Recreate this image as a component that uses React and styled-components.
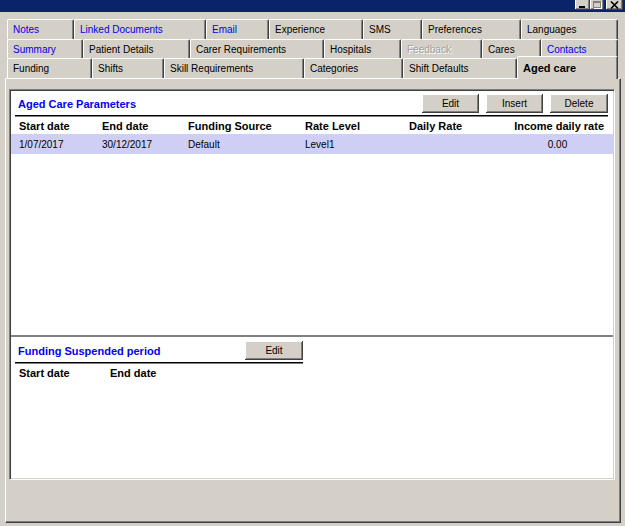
import React from 'react';
import styled, { createGlobalStyle, css } from 'styled-components';

const GlobalStyle = createGlobalStyle`
  html, body {
    margin: 0;
    padding: 0;
    background: #d4d0c8;
  }
  body {
    font-family: "Liberation Sans", Arial, sans-serif;
    font-size: 10px;
    color: #000;
  }
`;

const Window = styled.div`
  width: 625px;
  height: 526px;
  overflow: hidden;
  background: #d4d0c8;
  display: flex;
  flex-direction: column;
`;

const TitleBar = styled.div`
  flex-shrink: 0;
  height: 12px;
  box-sizing: border-box;
  padding: 0 2px 2px 0;
  background: #0a246a;
  display: flex;
  justify-content: flex-end;
  align-items: flex-end;
  overflow: hidden;
`;

const CaptionButton = styled.div`
  width: ${(p) => p.$w}px;
  height: 14px;
  margin-left: ${(p) => p.$gap || 0}px;
  flex-shrink: 0;
  box-sizing: border-box;
  background: #d4d0c8;
  box-shadow: inset -1px -1px 0 #404040, inset 1px 1px 0 #fff, inset -2px -2px 0 #808080;
  display: flex;
  align-items: center;
  justify-content: center;
  padding-top: 3px;
`;

const MinGlyph = styled.span`
  width: 6px;
  height: 2px;
  background: #000;
  margin-top: 5px;
  margin-right: 2px;
`;

const MaxGlyph = styled.span`
  width: 8px;
  height: 7px;
  box-sizing: border-box;
  border: 1px solid #808080;
  border-top-width: 2px;
  box-shadow: 1px 1px 0 #fff;
  margin-right: 1px;
`;

const Body = styled.div`
  flex: 1;
  display: flex;
  flex-direction: column;
  padding: 7px 4px 3px 5px;
  min-height: 0;
`;

const TabStack = styled.div`
  width: 611px;
  margin-left: 2px;
  display: flex;
  flex-direction: column;
`;

const TabRow = styled.div`
  display: flex;
  height: ${(p) => p.$h}px;
`;

const Tab = styled.div`
  width: ${(p) => p.$w}px;
  flex-shrink: 0;
  box-sizing: border-box;
  padding-left: 5px;
  display: flex;
  align-items: center;
  white-space: nowrap;
  overflow: hidden;
  background: #d4d0c8;
  border-top: 1px solid #fff;
  border-left: 1px solid #fff;
  border-right: 1px solid #404040;
  border-top-left-radius: 2px;
  border-top-right-radius: 2px;
  box-shadow: inset -1px 0 0 #808080;
  font-size: 10px;
  color: #000;
  ${(p) =>
    p.$kind === 'link' &&
    css`
      color: #0000f0;
    `}
  ${(p) =>
    p.$kind === 'disabled' &&
    css`
      color: #a0a0a0;
      text-shadow: 1px 1px 0 #fff;
    `}
  ${(p) =>
    p.$kind === 'selected' &&
    css`
      position: relative;
      z-index: 2;
      align-self: flex-start;
      height: 23px;
      margin-top: -2px;
      padding-bottom: 1px;
      font-weight: bold;
      font-size: 11px;
    `}
`;

const TabPanel = styled.div`
  flex: 1;
  min-height: 0;
  box-sizing: border-box;
  display: flex;
  flex-direction: column;
  border-top: 1px solid #fff;
  border-left: 1px solid #fff;
  border-right: 1px solid #404040;
  border-bottom: 1px solid #404040;
  box-shadow: inset -1px -1px 0 #808080;
  padding: 10px 5px 42px 3px;
`;

const Sunken = styled.div`
  flex: 1;
  display: flex;
  flex-direction: column;
  padding: 1px;
  background: #fff;
  border: 1px solid;
  border-color: #808080 #fff #fff #808080;
  box-shadow: inset 1px 1px 0 #404040, inset -1px -1px 0 #d4d0c8;
`;

const Section = styled.div`
  display: flex;
  flex-direction: column;
  box-sizing: border-box;
  ${(p) =>
    p.$height
      ? css`
          height: ${p.$height}px;
          flex-shrink: 0;
          border-bottom: 2px solid #808080;
        `
      : css`
          flex: 1;
        `}
`;

const SectionHeader = styled.div`
  display: flex;
  align-items: center;
  width: ${(p) => (p.$w ? `${p.$w}px` : 'auto')};
  margin: 0 5px 0 4px;
  padding: ${(p) => p.$pt}px 0 2px 3px;
  border-bottom: 1px solid #000;
  box-shadow: 0 1px 0 #808080;
  gap: 7px;
`;

const SectionTitle = styled.div`
  flex: 1;
  font-size: 11px;
  font-weight: bold;
  color: #0000ff;
  padding-top: 1px;
`;

const Button = styled.button`
  width: ${(p) => p.$w}px;
  height: 19px;
  padding: 0;
  margin: 0;
  border: none;
  background: #d4d0c8;
  font-family: "Liberation Sans", Arial, sans-serif;
  font-size: 10px;
  color: #000;
  box-shadow: inset -1px -1px 0 #404040, inset 1px 1px 0 #fff, inset -2px -2px 0 #808080;
`;

const GridRow = styled.div`
  display: grid;
  grid-template-columns: ${(p) => p.$cols};
  align-items: center;
  height: ${(p) => p.$h}px;
  padding: 0 9px 0 8px;
  margin-top: ${(p) => p.$mt || 0}px;
  background: ${(p) => (p.$selected ? '#cfcff5' : 'transparent')};
  font-size: ${(p) => (p.$head ? 11 : 10)}px;
  font-weight: ${(p) => (p.$head ? 'bold' : 'normal')};
  white-space: nowrap;
`;

const Cell = styled.div`
  text-align: ${(p) => p.$align || 'left'};
`;

const CloseIcon = () => (
  <svg width="9" height="8" viewBox="0 0 9 8" style={{ marginRight: 1 }}>
    <path d="M1 0.5 L8 7.5 M8 0.5 L1 7.5" stroke="#000" strokeWidth="1.6" />
  </svg>
);

const tabRows = [
  {
    h: 20,
    tabs: [
      ['Notes', 67, 'link'],
      ['Linked Documents', 132, 'link'],
      ['Email', 63, 'link'],
      ['Experience', 94],
      ['SMS', 59],
      ['Preferences', 99],
      ['Languages', 97],
    ],
  },
  {
    h: 19,
    tabs: [
      ['Summary', 76, 'link'],
      ['Patient Details', 107],
      ['Carer Requirements', 134],
      ['Hospitals', 77],
      ['Feedback', 81, 'disabled'],
      ['Cares', 59],
      ['Contacts', 77, 'link'],
    ],
  },
  {
    h: 20,
    tabs: [
      ['Funding', 85],
      ['Shifts', 72],
      ['Skill Requirements', 140],
      ['Categories', 99],
      ['Shift Defaults', 114],
      ['Aged care', 101, 'selected'],
    ],
  },
];

const paramCols = '83px 86px 117px 104px 102px 1fr';

const rows = [
  {
    start: '1/07/2017',
    end: '30/12/2017',
    source: 'Default',
    level: 'Level1',
    daily: '',
    income: '0.00',
  },
];

const App = () => {
  return (
    <Window>
      <GlobalStyle />
      <TitleBar>
        <CaptionButton $w={15}>
          <MinGlyph />
        </CaptionButton>
        <CaptionButton $w={14}>
          <MaxGlyph />
        </CaptionButton>
        <CaptionButton $w={17} $gap={2}>
          <CloseIcon />
        </CaptionButton>
      </TitleBar>

      <Body>
        <TabStack>
          {tabRows.map((row, i) => (
            <TabRow key={i} $h={row.h}>
              {row.tabs.map(([label, w, kind]) => (
                <Tab key={label} $w={w} $kind={kind}>
                  {label}
                </Tab>
              ))}
            </TabRow>
          ))}
        </TabStack>

        <TabPanel>
          <Sunken>
            <Section $height={246}>
              <SectionHeader $pt={3}>
                <SectionTitle>Aged Care Parameters</SectionTitle>
                <Button $w={57}>Edit</Button>
                <Button $w={57}>Insert</Button>
                <Button $w={58}>Delete</Button>
              </SectionHeader>
              <GridRow $cols={paramCols} $h={17} $head $mt={1}>
                <Cell>Start date</Cell>
                <Cell>End date</Cell>
                <Cell>Funding Source</Cell>
                <Cell>Rate Level</Cell>
                <Cell>Daily Rate</Cell>
                <Cell $align="right">Income daily rate</Cell>
              </GridRow>
              {rows.map((r) => (
                <GridRow key={r.start} $cols={paramCols} $h={20} $selected>
                  <Cell>{r.start}</Cell>
                  <Cell>{r.end}</Cell>
                  <Cell>{r.source}</Cell>
                  <Cell>{r.level}</Cell>
                  <Cell>{r.daily}</Cell>
                  <Cell $align="center">{r.income}</Cell>
                </GridRow>
              ))}
            </Section>

            <Section>
              <SectionHeader $pt={4} $w={285}>
                <SectionTitle>Funding Suspended period</SectionTitle>
                <Button $w={58}>Edit</Button>
              </SectionHeader>
              <GridRow $cols="91px 1fr" $h={18} $head $mt={1}>
                <Cell>Start date</Cell>
                <Cell>End date</Cell>
              </GridRow>
            </Section>
          </Sunken>
        </TabPanel>
      </Body>
    </Window>
  );
};

export default App;
